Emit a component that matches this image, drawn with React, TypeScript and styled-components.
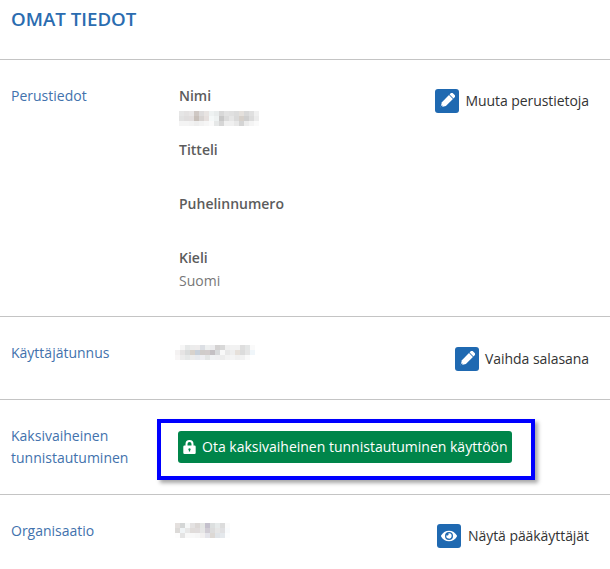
import styled, { createGlobalStyle } from "styled-components";
import { FaEye } from "react-icons/fa";

const GlobalStyle = createGlobalStyle`
  html, body {
    margin: 0;
    padding: 0;
    background: #fff;
  }
  body {
    font-family: "Open Sans", "Liberation Sans", sans-serif;
    font-size: 14px;
    line-height: 22px;
    color: #555;
  }
`;

// the blurred out values of the screenshot, one grey per 5px cell
const nameBlur = [
  ["#e6e6e6", "#e4e2e2", "#e8e6e6", "#cfc8c4", "#dedcdc", "#e8e4e2", "#eef2f2", "#e8ecec", "#d8d8d8", "#e2e2e2", "#e0e0e0", "#dcdcdc", "#e4e0dc", "#d8d8d8", "#e0e0e0", "#f0f0f0"],
  ["#e2e2e2", "#e0dede", "#e2dede", "#c8c0ba", "#d8d4d2", "#e6e0de", "#f4f8f8", "#eef2f2", "#c8c8c8", "#dcdcdc", "#e6e6e6", "#dadada", "#d6d0ca", "#cfcfcf", "#dcdcdc", "#ececec"],
  ["#f4f4f4", "#f4f4f4", "#f2f2f2", "#eeeeee", "#f2f2f2", "#f6f6f6", "#fafafa", "#e6e8e8", "#d6d6d6", "#f0f0f0", "#f0f0f0", "#e8e8e8", "#d4d4d4", "#ececec", "#f4f4f4", "#fafafa"],
];
const userBlur = [
  ["#ffffff", "#f6f6f6", "#e6e8e8", "#ececec", "#eeecec", "#dcdfe4", "#eef0f0", "#ececee", "#d4d2d2", "#d8d8d8", "#f0f0f0", "#f2f2f2", "#f2f2f2", "#dedede", "#e4e6e6", "#fafafa"],
  ["#f4f2f2", "#e6e4e4", "#dadcdc", "#d8d2cc", "#c8d0da", "#d0ccca", "#d2cccc", "#c4c0c4", "#d8dadc", "#f8f8f8", "#e8e8e8", "#eeeeee", "#e6e0da", "#dcdcdc", "#e6e6e6", "#f0f6fa"],
  ["#f8f6f6", "#ececec", "#e6e8e8", "#ececec", "#e8eaee", "#eeeef2", "#e4e6e6", "#f0f2f4", "#f0f0f2", "#ececec", "#f2f2f2", "#f4f4f4", "#f0f0f0", "#f2f2f2", "#fafafa", "#ffffff"],
];
const orgBlur = [
  ["#e4e0de", "#d4d6d6", "#f6f8f8", "#e4e2e2", "#dcd8d6", "#e4e6e4", "#c4c0cc", "#dcdfdf", "#e6eaea", "#dcdcdc", "#fbfbfb"],
  ["#dcdad8", "#f0f4f6", "#e8e8e8", "#e0dcda", "#e0dcdc", "#e6e6e6", "#d0ccd4", "#dcdcdc", "#e6e6e6", "#e0e0e2", "#f8fafc"],
  ["#fdfdfd", "#e4e4e4", "#f8f8f8", "#f8f8f8", "#f6f6f6", "#f2f0f0", "#e4e4ea", "#dcd8d4", "#e0e4e8", "#e4e8ec", "#fcfdfe"],
];

const Blur = ({ cells }: { cells: string[][] }) => (
  <BlurImage
    width={cells[0].length * 5}
    height={cells.length * 5}
    shapeRendering="crispEdges"
  >
    {cells.map((row, y) =>
      row.map((fill, x) => (
        <rect key={`${x}-${y}`} x={x * 5} y={y * 5} width="5" height="5" fill={fill} />
      ))
    )}
  </BlurImage>
);

const PencilIcon = () => (
  <svg width="16" height="16" viewBox="0 0 16 16" fill="#fff">
    <g transform="rotate(45 8 8)">
      <path d="M5.2 -0.4a1.2 1.2 0 0 1 1.2 -1.2h3.2a1.2 1.2 0 0 1 1.2 1.2v2h-5.6z" />
      <path d="M5.2 2.4h5.6v10l-2.8 4.6l-2.8 -4.6z" />
      <path d="M8 14.2l1 1.6l-1 1.2l-1 -1.2z" fill="#1f69b1" />
    </g>
  </svg>
);

const LockIcon = () => (
  <svg width="13" height="14" viewBox="0 0 13 14" fill="#fff">
    <path
      fillRule="evenodd"
      d="M2.5 5.5V4a4 4 0 0 1 8 0v1.5h1a1.2 1.2 0 0 1 1.2 1.2v6a1.2 1.2 0 0 1 -1.2 1.2h-10a1.2 1.2 0 0 1 -1.2 -1.2v-6a1.2 1.2 0 0 1 1.2 -1.2zM4.5 5.5h4V4a2 2 0 0 0 -4 0zM6.5 8.2a1.2 1.2 0 0 0 -0.6 2.2v1.2h1.2v-1.2a1.2 1.2 0 0 0 -0.6 -2.2z"
    />
  </svg>
);

export default function App() {
  return (
    <Page>
      <GlobalStyle />
      <Title>OMAT TIEDOT</Title>

      <BasicRow>
        <Label>Perustiedot</Label>
        <Fields>
          <Field>
            <FieldName>Nimi</FieldName>
            <FieldValue>
              <Blur cells={nameBlur} />
            </FieldValue>
          </Field>
          <Field>
            <FieldName>Titteli</FieldName>
            <FieldValue />
          </Field>
          <Field>
            <FieldName>Puhelinnumero</FieldName>
            <FieldValue />
          </Field>
          <Field>
            <FieldName>Kieli</FieldName>
            <FieldValue>Suomi</FieldValue>
          </Field>
        </Fields>
        <Action $top={4}>
          <IconBox>
            <PencilIcon />
          </IconBox>
          Muuta perustietoja
        </Action>
      </BasicRow>

      <UserRow>
        <Label>Käyttäjätunnus</Label>
        <UserValue>
          <Blur cells={userBlur} />
        </UserValue>
        <Action $top={5}>
          <IconBox>
            <PencilIcon />
          </IconBox>
          Vaihda salasana
        </Action>
      </UserRow>

      <TwoFactorRow>
        <TwoLineLabel>
          Kaksivaiheinen
          <br />
          tunnistautuminen
        </TwoLineLabel>
        <Highlight>
          <GreenButton>
            <LockIcon />
            Ota kaksivaiheinen tunnistautuminen käyttöön
          </GreenButton>
        </Highlight>
      </TwoFactorRow>

      <OrgRow>
        <Label>Organisaatio</Label>
        <UserValue>
          <Blur cells={orgBlur} />
        </UserValue>
        <Action $top={4}>
          <EyeBox>
            <FaEye size={16} />
          </EyeBox>
          Näytä pääkäyttäjät
        </Action>
      </OrgRow>
    </Page>
  );
}

const Page = styled.div`
  width: 610px;
  height: 569px;
  overflow: hidden;
`;
const Title = styled.h1`
  margin: 0;
  height: 59px;
  padding: 6px 11px 0;
  box-sizing: border-box;
  font-size: 18.7px;
  line-height: 25px;
  font-weight: 600;
  color: #2a6cb0;
`;
const Row = styled.section`
  display: flex;
  align-items: flex-start;
  box-sizing: border-box;
  border-top: 1px solid #c4c4c4;
  padding-left: 11px;
  padding-right: 21px;
`;
const BasicRow = styled(Row)`
  height: 257px;
  padding-top: 25px;
`;
const UserRow = styled(Row)`
  height: 83px;
  padding-top: 25px;
`;
const TwoFactorRow = styled(Row)`
  height: 95px;
  padding-top: 19px;
`;
const OrgRow = styled(Row)`
  height: 75px;
  padding-top: 25px;
`;
const Label = styled.div`
  width: 146px;
  flex-shrink: 0;
  color: #4272ad;
`;
const TwoLineLabel = styled(Label)`
  margin-top: 6px;
`;
const Fields = styled.div`
  margin-left: 22px;
  flex: 1;
`;
const Field = styled.div`
  margin-bottom: 10px;
`;
const FieldName = styled.div`
  font-weight: 600;
  color: #5c5c5c;
`;
const FieldValue = styled.div`
  box-sizing: border-box;
  height: 22px;
  padding-top: 1px;
  color: #777;
`;
const BlurImage = styled.svg`
  display: block;
  padding-top: 3px;
  overflow: visible;
`;
const UserValue = styled.div`
  flex: 1;
  margin-left: 18px;
`;
const Action = styled.div<{ $top: number }>`
  display: flex;
  align-items: center;
  gap: 6px;
  margin-top: ${(p) => p.$top}px;
  margin-left: auto;
  color: #333;
  letter-spacing: -0.06px;
`;
const IconBox = styled.span`
  width: 24px;
  height: 24px;
  display: flex;
  align-items: center;
  justify-content: center;
  border-radius: 3px;
  background: #1f69b1;
  color: #fff;
`;
const EyeBox = styled(IconBox)`
  margin-right: 1px;
`;
const Highlight = styled.div`
  padding: 8px 19px 13px 17px;
  border: 4px solid #0000ff;
  box-shadow: 3px 3px 4px rgba(0, 0, 0, 0.35);
`;
const GreenButton = styled.div`
  display: flex;
  align-items: center;
  gap: 6px;
  height: 32px;
  padding: 0 4px 0 5px;
  border-radius: 3px;
  background: #00854a;
  color: #fff;
  white-space: nowrap;
`;
